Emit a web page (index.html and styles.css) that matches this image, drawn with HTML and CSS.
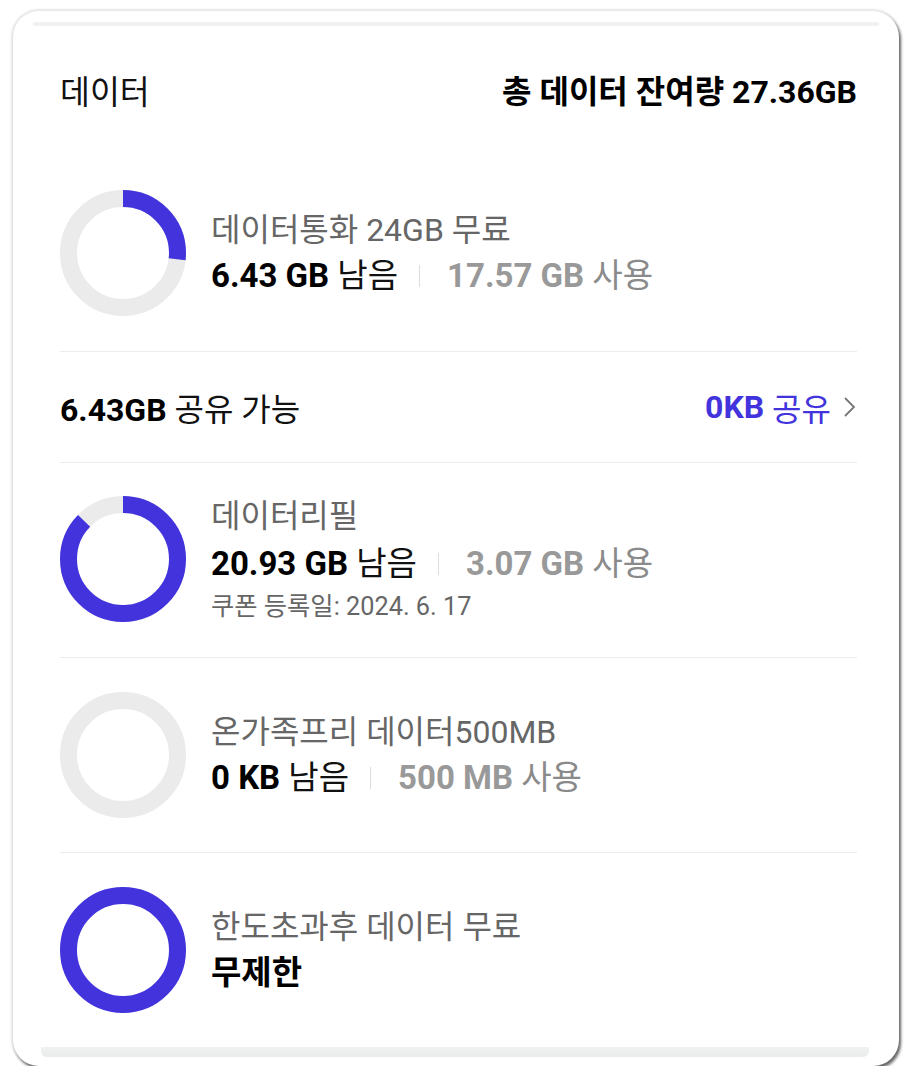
FILE: index.html
```html
<!DOCTYPE html>
<html lang="ko">
<head>
<meta charset="utf-8">
<link rel="stylesheet" href="styles.css">
</head>
<body>
<div class="card">
  <div class="band-top"></div>
  <div class="header">
    <span class="h-left">데이터</span>
    <span class="h-right">총 데이터 잔여량 27.36GB</span>
  </div>

  <div class="row r1">
    <svg class="ring" viewBox="0 0 126 126" width="126" height="126">
      <circle cx="63" cy="63" r="54.5" class="track"/>
      <circle cx="63" cy="63" r="54.5" class="bar" stroke-dasharray="91.8 400" transform="rotate(-90 63 63)"/>
    </svg>
    <div class="info">
      <div class="title">데이터통화 24GB 무료</div>
      <div class="amount"><b>6.43 GB</b>&nbsp;남음<span class="sep"></span><span class="used"><b>17.57 GB</b>&nbsp;사용</span></div>
    </div>
  </div>
  <div class="divider"></div>

  <div class="share">
    <span class="share-l"><b>6.43GB</b> 공유 가능</span>
    <span class="share-r"><b>0KB</b>&nbsp;공유<svg class="chev" viewBox="0 0 14 22" width="14" height="22"><polyline points="2,2 11,11 2,20"/></svg></span>
  </div>
  <div class="divider"></div>

  <div class="row r2">
    <svg class="ring" viewBox="0 0 126 126" width="126" height="126">
      <circle cx="63" cy="63" r="54.5" class="track"/>
      <circle cx="63" cy="63" r="54.5" class="bar" stroke-dasharray="298.6 400" transform="rotate(-90 63 63)"/>
    </svg>
    <div class="info">
      <div class="title t2">데이터리필</div>
      <div class="amount a2"><b>20.93 GB</b>&nbsp;남음<span class="sep"></span><span class="used"><b>3.07 GB</b>&nbsp;사용</span></div>
      <div class="note">쿠폰 등록일: 2024. 6. 17</div>
    </div>
  </div>
  <div class="divider"></div>

  <div class="row r3">
    <svg class="ring" viewBox="0 0 126 126" width="126" height="126">
      <circle cx="63" cy="63" r="54.5" class="track"/>
    </svg>
    <div class="info">
      <div class="title">온가족프리 데이터500MB</div>
      <div class="amount"><b>0 KB</b>&nbsp;남음<span class="sep"></span><span class="used"><b>500 MB</b>&nbsp;사용</span></div>
    </div>
  </div>
  <div class="divider"></div>

  <div class="row r4">
    <svg class="ring" viewBox="0 0 126 126" width="126" height="126">
      <circle cx="63" cy="63" r="54.5" class="bar"/>
    </svg>
    <div class="info">
      <div class="title">한도초과후 데이터 무료</div>
      <div class="amount"><b>무제한</b></div>
    </div>
  </div>
  <div class="band-bottom"></div>
</div>
</body>
</html>
```

FILE: styles.css
```css
html, body {
  margin: 0;
  padding: 0;
  background: #ffffff;
}
body {
  font-family: Roboto, "Noto Sans CJK KR", sans-serif;
  color: #111;
}
.card {
  margin: 11px 15px 0 13px;
  width: 886px;
  height: 1055px;
  box-sizing: border-box;
  padding: 0 42px 0 47px;
  background: #fff;
  border-radius: 26px;
  box-shadow: 0 0 2px 2px rgba(0,0,0,0.10), 2px 3px 3px rgba(0,0,0,0.55);
  display: flex;
  flex-direction: column;
}
.band-top {
  height: 4px;
  margin: 11px -22px 0 -27px;
  background: #f1f1f1;
  border-radius: 2px;
  flex: none;
}
.header {
  height: 129px;
  display: flex;
  align-items: center;
  justify-content: space-between;
  flex: none;
}
.h-left {
  font-size: 32.5px;
  color: #111;
  margin-top: -3px;
}
.h-right {
  font-size: 32px;
  font-weight: 700;
  color: #000;
  margin-top: -3px;
}
.row {
  display: flex;
  align-items: center;
  gap: 25px;
  padding: 34px 0;
  flex: none;
}
.r1 { padding: 35px 0 35px; }
.r2 { padding: 29px 0 31px; }
.ring { flex: none; display: block; }
.track {
  fill: none;
  stroke: #ebebeb;
  stroke-width: 17;
}
.bar {
  fill: none;
  stroke: #4233dc;
  stroke-width: 17;
}
.info {
  display: flex;
  flex-direction: column;
}
.title {
  font-size: 32px;
  line-height: 46px;
  color: #666;
  white-space: nowrap;
}
.amount {
  font-size: 33px;
  line-height: 46px;
  color: #111;
  display: flex;
  align-items: center;
  white-space: nowrap;
}
.t2 { line-height: 48px; }
.a2 { line-height: 48px; }
.amount b { font-weight: 700; color: #000; }
.sep {
  display: inline-block;
  width: 1px;
  height: 22px;
  background: #dddddd;
  margin: 0 27px 0 21px;
}
.used { color: #8a8a8a; }
.used b { color: #999; font-weight: 700; }
.note {
  font-size: 25.3px;
  line-height: 38px;
  color: #666;
  white-space: nowrap;
}
.divider {
  height: 1px;
  background: #ececec;
  flex: none;
}
.share {
  height: 110px;
  display: flex;
  align-items: center;
  justify-content: space-between;
  flex: none;
}
.share-l {
  font-size: 32px;
  color: #111;
}
.share-l b { font-weight: 700; color: #000; }
.share-r {
  font-size: 32px;
  color: #4233dc;
  display: flex;
  align-items: center;
  white-space: nowrap;
}
.share-r b { font-weight: 700; }
.chev {
  margin-left: 12px;
  fill: none;
  stroke: #777;
  stroke-width: 1.8;
}
.band-bottom {
  height: 10px;
  margin: 0 -12px 0 -19px;
  background: linear-gradient(#f0f1f1, #eaecec);
  border-radius: 0 0 6px 6px;
  flex: none;
}
```
